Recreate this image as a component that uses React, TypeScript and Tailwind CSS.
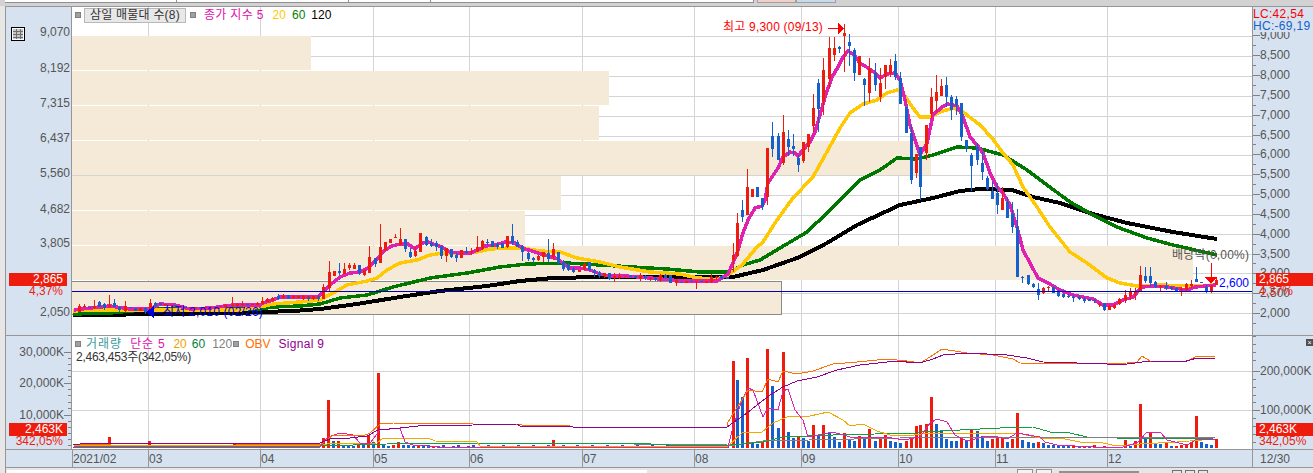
import React from 'react';

type Row = number[];

const RED = '#ee1c0c';
const BLUE = '#1660cc';

const font = { fontFamily: '"Liberation Sans", "Noto Sans CJK KR", sans-serif' };

// rows are read as: zoomX, bodyTop, bodyBottom, colour (0 red, 1 blue), wickTop, wickBottom
function seg(x0: number, y0: number, rows: Row[]) {
  return rows.map(([zx, t, b, c, wt, wb]) => ({
    x: Math.round(x0 + zx / 3),
    t: y0 + t / 3,
    b: y0 + b / 3,
    c,
    wt: y0 + (wt ?? t) / 3,
    wb: y0 + (wb ?? b) / 3,
  }));
}

const candles = [
  ...seg(60, 230, [
    [58, 228, 245, 0, 222, 245], [73, 228, 230, 0, 222, 235], [88, 230, 235, 1], [103, 228, 235, 0, 210, 238],
    [118, 215, 230, 1, 212, 232], [133, 222, 233, 1, 218, 240], [148, 224, 230, 0, 195, 232], [163, 218, 232, 1, 207, 232],
    [178, 232, 240, 1, 228, 247], [196, 228, 243, 0, 212, 246], [211, 230, 235, 1], [226, 235, 243, 1], [241, 233, 243, 0],
    [256, 235, 245, 1, 232, 252], [271, 220, 240, 0, 207, 245], [286, 218, 228, 1, 215, 235], [301, 218, 226, 1], [316, 222, 228, 0],
    [331, 225, 229, 0], [346, 226, 229, 1], [361, 228, 232, 0], [376, 230, 233, 1], [391, 231, 234, 0], [406, 231, 234, 0],
    [421, 232, 235, 1], [436, 232, 235, 0], [451, 230, 234, 0], [466, 231, 234, 1], [481, 228, 232, 0], [496, 226, 231, 0, 222, 233],
    [517, 224, 229, 0, 200, 230], [532, 222, 227, 0, 218, 230], [547, 222, 226, 0, 212, 228], [562, 222, 226, 1], [577, 222, 225, 0],
    [592, 218, 224, 0, 215, 226], [607, 214, 221, 0, 200, 223], [622, 208, 215, 0, 205, 216], [637, 205, 212, 0, 200, 214],
    [655, 198, 208, 1, 191, 210], [670, 198, 205, 0, 192, 206], [685, 196, 208, 1], [700, 197, 203, 0, 194, 206], [715, 198, 203, 0],
    [730, 199, 203, 0, 196, 210], [745, 199, 203, 0, 197, 212], [760, 199, 203, 0, 197, 210], [775, 198, 204, 0, 194, 212],
  ]),
  ...seg(300, 210, [
    [10, 263, 265, 0, 258, 270], [25, 263, 266, 1, 258, 272], [40, 263, 265, 0, 258, 271], [55, 262, 266, 1, 256, 270],
    [70, 232, 268, 0, 222, 268], [88, 185, 235, 0, 153, 243], [103, 183, 198, 0], [118, 183, 188, 1, 158, 195], [133, 178, 193, 0, 160, 193],
    [148, 165, 175, 0, 158, 180], [163, 165, 178, 0, 158, 178], [178, 165, 190, 1, 165, 195], [193, 180, 195, 0, 180, 198],
    [208, 140, 188, 0, 108, 188], [226, 143, 163, 1, 143, 170], [241, 110, 160, 0, 42, 160], [256, 96, 120, 0, 96, 122], [271, 88, 100, 0],
    [286, 82, 84, 0, 72, 84], [301, 88, 106, 0, 55, 106], [316, 87, 117, 1, 87, 125], [331, 125, 140, 1, 113, 145], [346, 122, 138, 0, 110, 140],
    [361, 69, 125, 0, 69, 127], [379, 82, 105, 1, 78, 108], [394, 100, 108, 1, 87, 112], [409, 100, 110, 1, 93, 122], [424, 108, 138, 1, 108, 147],
    [439, 113, 138, 0, 113, 155], [454, 118, 142, 1, 118, 145], [469, 135, 143, 1, 130, 155], [484, 120, 143, 0], [499, 122, 128, 1, 112, 130],
    [514, 122, 125, 0, 115, 135], [531, 112, 122, 0, 78, 125], [547, 92, 117, 0, 90, 120], [562, 95, 100, 1, 87, 105], [577, 93, 110, 1],
    [592, 103, 110, 1, 100, 118], [607, 100, 115, 1], [622, 78, 112, 0, 78, 115], [637, 78, 100, 1, 42, 105], [652, 95, 110, 1, 90, 112],
    [667, 108, 127, 1, 105, 153], [685, 130, 148, 1, 125, 152], [700, 143, 150, 1, 140, 158], [715, 137, 150, 0, 135, 153], [730, 127, 140, 0, 127, 157],
    [745, 130, 147, 1, 87, 155], [760, 118, 140, 0, 100, 150], [775, 127, 160, 1, 125, 162], [790, 155, 178, 1, 150, 182], [805, 162, 180, 1, 160, 183],
    [820, 176, 185, 1, 170, 188], [838, 180, 185, 0], [853, 163, 178, 0, 155, 180], [868, 157, 180, 1, 155, 182], [883, 180, 190, 1, 178, 202],
    [898, 188, 197, 1, 183, 203], [913, 190, 197, 0, 188, 205], [928, 190, 207, 1, 188, 210], [943, 197, 203, 0, 190, 215], [958, 197, 203, 0, 190, 207],
    [975, 198, 201, 0], [990, 196, 202, 1], [1005, 198, 203, 1], [1020, 195, 208, 0, 190, 213], [1035, 198, 205, 1, 195, 210], [1050, 205, 208, 0, 200, 212],
    [1065, 203, 209, 1, 200, 212], [1080, 195, 210, 0, 193, 215], [1095, 194, 204, 1, 192, 208], [1110, 196, 218, 1], [1128, 210, 218, 0, 207, 228],
    [1143, 215, 220, 1], [1158, 214, 220, 0], [1173, 213, 216, 1], [1188, 213, 216, 0, 213, 236], [1203, 213, 216, 1], [1218, 213, 218, 0],
    [1233, 202, 216, 0, 193, 218], [1248, 200, 204, 0, 198, 210],
  ]),
  ...seg(700, 200, [
    [64, 228, 237, 1], [82, 230, 237, 1],
    [98, 165, 180, 0, 130, 215], [112, 68, 168, 0, 40, 170], [127, 30, 50, 1, 0, 65], [142, -40, 45, 0, -93, 45],
    [157, -33, -9, 0], [172, -39, -9, 1], [187, -6, 20, 1, -6, 30], [202, -156, -9, 0, -156, 15],
  ]),
  ...seg(700, 0, [
    [217, 407, 447, 1, 365, 470], [235, 407, 480, 1, 400, 480], [250, 397, 488, 0, 345, 495], [265, 417, 440, 1, 390, 467], [280, 437, 447, 1, 403, 467],
    [295, 473, 495, 1, 465, 515], [310, 426, 482, 0, 426, 490], [325, 403, 440, 0, 403, 455], [340, 324, 377, 0, 282, 395], [355, 250, 327, 1, 238, 395],
    [370, 210, 303, 0, 175, 345], [388, 143, 238, 0, 112, 265], [403, 143, 165, 0, 112, 183], [418, 140, 147, 1, 137, 158], [433, 100, 107, 0, 72, 215],
    [448, 125, 137, 1, 103, 197], [463, 150, 218, 1, 145, 242], [478, 168, 225, 0], [493, 237, 255, 1, 235, 317], [508, 205, 278, 0, 175, 305],
    [525, 220, 255, 1, 190, 272], [541, 248, 290, 0, 205, 305], [556, 195, 232, 0, 195, 267], [571, 195, 220, 0, 178, 232], [586, 183, 232, 1, 162, 240],
    [601, 235, 312, 1, 215, 312], [617, 320, 400, 1], [632, 400, 540, 1, 375, 552], [647, 463, 520, 0, 463, 533], [661, 440, 562, 1, 440, 600],
    [679, 375, 460, 0, 375, 480], [694, 292, 342, 0, 265, 355], [709, 277, 303, 0, 225, 335], [724, 258, 288, 0, 237, 288], [739, 255, 292, 1, 232, 320],
    [754, 290, 330, 1, 285, 360], [769, 297, 315, 1, 288, 345],
  ]),
  ...seg(960, 70, [
    [3, 100, 200, 1, 100, 212], [18, 210, 235, 1, 210, 245], [33, 255, 288, 1, 250, 362], [52, 232, 270, 1, 220, 285], [67, 280, 305, 1, 245, 330],
    [82, 323, 358, 1, 318, 360], [97, 362, 387, 1, 335, 387], [112, 370, 405, 1, 340, 432], [127, 385, 420, 0, 350, 420], [142, 395, 443, 1, 380, 443],
    [157, 432, 470, 1, 395, 490], [172, 472, 620, 1, 417, 620], [187, 622, 625, 1, 618, 640], [205, 615, 642, 1, 615, 645], [220, 642, 650, 1, 638, 655],
    [235, 658, 675, 1, 640, 690], [250, 655, 670, 0, 650, 672], [265, 652, 654, 0, 648, 665], [280, 650, 668, 1], [295, 665, 678, 1, 660, 680],
    [310, 672, 682, 1, 668, 685], [325, 678, 680, 1, 672, 684], [340, 680, 684, 1, 675, 695], [358, 680, 688, 1, 675, 690], [373, 686, 694, 1, 682, 698],
    [388, 688, 693, 1], [403, 690, 692, 1, 688, 700], [418, 703, 706, 0, 698, 710], [433, 700, 719, 1, 698, 722], [448, 708, 719, 0, 705, 720],
    [463, 704, 714, 0, 702, 716], [478, 688, 703, 0, 683, 705], [495, 676, 690, 0, 660, 700], [511, 666, 678, 0, 655, 690], [526, 665, 672, 0, 655, 690],
    [541, 615, 662, 0, 588, 665], [556, 618, 633, 1, 590, 640], [571, 618, 640, 1, 590, 650], [586, 637, 650, 1, 632, 655], [601, 648, 652, 0, 645, 662],
    [617, 648, 655, 1, 635, 660], [632, 650, 656, 1, 648, 660], [648, 654, 662, 1, 650, 665], [664, 656, 660, 0, 652, 678], [679, 643, 660, 0, 640, 662],
    [694, 642, 648, 0, 630, 655], [709, 628, 635, 1, 590, 635], [724, 637, 640, 1], [739, 650, 665, 1, 645, 668], [754, 648, 665, 0, 645, 668], [769, 630, 645, 0, 620, 645],
  ]),
];

const ma5 = '74,310 90,308 110,306 130,309 150,309 160,304 175,305 190,309 210,308 233,305 260,305 263,303 273,300 280,297 300,297 318,297 323,292 330,285 340,277 350,273 360,272 368,268 378,258 385,250 392,246 400,244 408,244 415,249 422,243 428,242 436,245 442,247 450,252 458,253 470,253 478,250 485,246 495,245 505,242 515,243 522,248 535,252 548,256 558,259 565,265 570,268 580,268 590,270 600,274 610,276 625,276 640,277 660,279 672,280 680,281 717,281 728,274 733,263 738,250 743,233 748,220 755,208 762,206 765,200 768,183 778,168 783,157 790,152 795,153 798,156 803,150 810,142 815,132 820,115 825,97 832,77 838,67 843,57 848,51 854,55 860,63 868,68 875,73 880,78 887,74 895,73 900,80 905,100 910,125 915,140 920,155 927,143 933,115 942,107 948,104 957,106 963,117 970,137 977,145 983,153 990,173 997,187 1003,193 1010,205 1017,227 1023,250 1030,263 1038,278 1048,283 1060,290 1073,295 1093,299 1103,305 1113,305 1123,300 1133,297 1142,287 1153,286 1167,287 1187,290 1195,287 1216,285';
const ma20 = '73,311 93,310 150,310 240,310 260,307 273,304 300,302 320,300 333,293 347,285 367,281 377,278 387,270 400,263 417,260 430,255 443,253 460,253 477,252 490,249 510,248 523,248 540,251 560,252 577,258 600,262 620,267 650,272 680,274 693,277 715,280 728,275 742,265 757,247 763,242 775,223 790,202 793,198 813,177 828,150 840,128 850,113 863,104 877,100 887,93 897,90 903,93 913,108 920,117 930,117 940,112 953,108 963,112 980,125 992,138 1003,153 1013,165 1023,187 1037,207 1050,227 1070,252 1087,263 1107,278 1120,283 1137,286 1160,285 1193,286 1216,285';
const ma60 = '73,314 110,313 153,309 260,309 273,307 300,306 320,304 340,298 367,295 393,287 430,278 467,273 500,267 527,264 567,263 600,265 633,267 667,269 700,272 730,272 743,265 760,260 780,248 807,232 827,213 840,200 860,180 880,170 897,158 917,159 933,155 957,147 977,148 1003,155 1027,170 1047,185 1070,202 1093,215 1117,227 1147,238 1173,245 1217,255';
const ma120 = '73,315 107,315 147,314 237,313 263,312 293,311 320,309 357,304 400,297 440,291 487,286 520,281 553,278 600,277 733,277 763,270 800,257 827,243 857,225 900,205 933,198 960,191 980,189 1012,190 1033,197 1060,203 1093,214 1127,223 1173,232 1217,239';

const obv = '73,445 150,443 320,445 333,435 363,436 370,433 380,424 393,423 473,424 570,426 727,426 728,422 740,403 748,390 762,392 768,379 778,382 783,371 797,374 813,371 833,364 857,362 887,359 907,361 920,363 930,357 942,349 967,353 993,355 1013,359 1020,363 1077,364 1127,363 1137,362 1142,356 1150,361 1187,361 1197,356 1215,356';
const signal = '73,445 87,443 320,443 330,439 350,438 367,436 378,430 400,428 418,426 473,425 517,424 520,426 570,426 573,427 727,427 737,420 747,413 757,405 770,395 783,387 797,381 817,377 837,370 860,365 887,362 903,361 910,363 923,362 933,359 943,355 967,353 1007,355 1027,358 1043,362 1077,363 1107,364 1127,364 1150,361 1183,362 1197,358 1215,358';
const volMa5 = '74,447 320,447 328,437 340,433 353,435 360,443 370,443 380,430 400,428 405,442 413,445 440,447 728,447 733,427 742,400 748,388 753,390 763,417 768,408 778,410 783,391 788,389 795,410 803,420 808,437 833,432 850,437 887,437 903,440 920,437 930,423 937,419 947,422 955,435 967,441 983,437 993,436 1007,439 1017,433 1040,437 1045,442 1057,445 1093,447 1123,447 1137,443 1147,432 1160,432 1167,440 1187,445 1197,439 1215,439';
const volMa20 = '74,446 320,445 327,444 377,443 383,438 428,438 435,441 477,442 480,446 727,447 743,432 762,432 773,423 787,417 810,416 828,412 843,420 850,426 863,424 877,431 890,435 908,436 927,433 1017,433 1040,438 1060,438 1080,442 1103,443 1117,446 1140,444 1177,442 1215,439';
const volMa60 = '74,447 320,446 387,444 633,443 687,446 730,445 763,442 783,437 833,435 917,433 920,432 960,430 1000,428 1033,427 1050,432 1070,433 1087,437';
const volMa60b = '1117,438 1213,438';
const volMa120 = '633,444 727,445 728,446 763,441 900,438 1087,437 1215,437';

const volHand: Row[] = [
  [79, 444, 0], [109, 437, 0], [150, 441, 0], [232, 443, 0], [240, 445, 0], [255, 445, 0],
  [323, 438, 0], [329, 400, 0], [334, 441, 1], [339, 441, 0], [344, 446, 1], [349, 446, 1], [354, 446, 1], [359, 445, 0], [364, 445, 1],
  [369, 435, 0], [374, 442, 1], [380, 373, 0], [385, 444, 1], [390, 446, 1], [395, 445, 0], [400, 442, 0], [405, 445, 1], [410, 445, 1], [415, 446, 1],
  [420, 445, 0], [553, 440, 0],
];
const volLate: { x: number; t: number; c: number }[] = [
  ...[[98, 483, 0], [112, 540, 1], [127, 590, 1], [142, 473, 0], [157, 727, 1], [172, 732, 1], [187, 725, 0], [202, 447, 0], [217, 558, 1], [235, 683, 1], [250, 456, 0], [265, 695, 1], [280, 713, 1], [295, 710, 0], [310, 713, 1], [325, 722, 1], [340, 675, 0], [355, 706, 1], [370, 675, 0], [388, 697, 1], [403, 711, 1], [418, 725, 1], [433, 699, 0], [448, 720, 1], [463, 722, 1], [478, 708, 0], [493, 712, 1], [508, 686, 0], [525, 722, 1], [541, 716, 0], [556, 706, 0], [571, 722, 1], [586, 726, 1], [601, 728, 1], [617, 722, 0], [632, 714, 0], [647, 678, 0], [661, 675, 0], [679, 672, 0], [694, 591, 0], [709, 672, 1], [724, 692, 1], [739, 716, 1], [754, 723, 1], [769, 723, 1]].map(([z, t, c]) => ({ x: Math.round(700 + z / 3), t: 200 + t / 3, c })),
  ...[[3, 295, 0], [18, 302, 1], [33, 270, 0], [52, 273, 1], [67, 287, 1], [82, 303, 1], [97, 297, 0], [112, 293, 0], [127, 295, 0], [142, 306, 1], [157, 296, 0], [172, 219, 0], [187, 300, 1], [205, 306, 1], [220, 310, 1], [235, 306, 0], [250, 308, 1], [265, 315, 1], [280, 315, 1], [295, 315, 1], [310, 318, 1], [325, 318, 1], [340, 316, 0], [358, 320, 1], [373, 320, 0], [388, 320, 1], [403, 316, 0], [418, 320, 1], [433, 318, 0], [448, 320, 1], [463, 320, 1], [478, 320, 0], [495, 300, 0], [511, 318, 1], [526, 303, 0], [541, 192, 0], [556, 291, 1], [571, 276, 0], [586, 308, 1], [601, 312, 1], [617, 308, 0], [632, 318, 1], [648, 318, 0], [664, 316, 0], [679, 313, 0], [694, 307, 0], [709, 228, 0], [724, 306, 1], [739, 312, 1], [754, 316, 1], [769, 297, 0]].map(([z, t, c]) => ({ x: Math.round(960 + z / 3), t: 340 + t / 3, c })),
];

// the quiet months before the spike only have tiny bars
const volEarly = Array.from({ length: 132 }, (_, i) => {
  const x = Math.round(74 + i * 4.985);
  const hand = volHand.find((v) => Math.abs(v[0] - x) <= 2);
  if (hand) return { x, t: hand[1], c: hand[2] };
  return { x, t: 448 - (1 + ((i * 7) % 3)), c: i % 3 === 0 ? 0 : 1 };
});
const volumes = [...volEarly, ...volLate];

const profile = [
  { y: 36, h: 34, w: 311 },
  { y: 71, h: 34, w: 609 },
  { y: 106, h: 34, w: 599 },
  { y: 141, h: 34, w: 931 },
  { y: 176, h: 34, w: 561 },
  { y: 211, h: 34, w: 525 },
  { y: 246, h: 34, w: 1193 },
  { y: 282, h: 32, w: 781 },
];

const gridV = [148, 260, 373, 469, 582, 694, 801, 898, 995, 1107];
const gridTop = [36, 56, 76, 96, 116, 136, 155, 175, 195, 215, 234, 254, 273, 293, 313];
const gridBottom = [371, 410];

const priceLeft: [string, number][] = [
  ['9,070', 32], ['8,192', 68], ['7,315', 103], ['6,437', 138], ['5,560', 173], ['4,682', 209], ['3,805', 243], ['2,050', 312],
];
// 9,000, 3,000 and 2,500 lie partly under the LC/HC box and the price badge, as in the real chart
const priceRight: [string, number][] = [
  ['9,000', 35], ['8,500', 55], ['8,000', 75], ['7,500', 95], ['7,000', 115], ['6,500', 135], ['6,000', 154], ['5,500', 174], ['5,000', 194],
  ['4,500', 214], ['4,000', 234], ['3,500', 254], ['3,000', 273], ['2,500', 293], ['2,000', 313],
];
const dates: [string, number][] = [
  ['2021/02', 73], ['03', 149], ['04', 261], ['05', 374], ['06', 470], ['07', 583], ['08', 695], ['09', 802], ['10', 899], ['11', 996], ['12', 1108],
];

function Marker() {
  return <span className="block w-[6px] h-[6px] bg-[#a0a0a0] border border-[#808080]" />;
}

function Badge({ value, pct, side }: { value: string; pct: string; side: 'left' | 'right' }) {
  return (
    <div className={side === 'left' ? 'w-[58px] ml-[3px]' : 'w-full'}>
      <div className={`h-[13px] bg-[#ee1c0c] text-white text-[12px] leading-[13px] ${side === 'left' ? 'text-right pr-[4px]' : 'pl-[3px]'}`}>{value}</div>
      <div className={`h-[11px] text-[#ee1c0c] text-[12px] leading-[11px] ${side === 'left' ? 'text-right pr-[4px]' : 'pl-[3px]'}`}>{pct}</div>
    </div>
  );
}

function Label({ text, y, className }: { text: string; y: number; className: string }) {
  return (
    <span className={`absolute leading-[14px] whitespace-nowrap ${className}`} style={{ top: y - 7 }}>
      {text}
    </span>
  );
}

function Poly({ points, stroke, width }: { points: string; stroke: string; width: number }) {
  return <polyline points={points} fill="none" stroke={stroke} strokeWidth={width} strokeLinejoin="round" />;
}

function UpperChart() {
  return (
    <svg width={1180} height={328} viewBox="72 7 1180 328" shapeRendering="crispEdges" className="block">
      {gridTop.map((y) => (
        <rect key={y} x={72} y={y} width={1180} height={1} fill="#d4d4d4" />
      ))}
      {gridV.map((x) => (
        <rect key={x} x={x} y={7} width={1} height={328} fill="#d4d4d4" />
      ))}
      {profile.map((p) => (
        <rect key={p.y} x={72} y={p.y} width={p.w - 72} height={p.h} fill="#f5e9d8" />
      ))}
      <rect x={72} y={281} width={709} height={1} fill="#8a8a8a" />
      <rect x={72} y={314} width={710} height={1} fill="#8a8a8a" />
      <rect x={781} y={281} width={1} height={34} fill="#8a8a8a" />
      <Poly points={ma120} stroke="#000000" width={4} />
      <Poly points={ma60} stroke="#007800" width={3.5} />
      <Poly points={ma20} stroke="#ffc800" width={3.5} />
      <Poly points={ma5} stroke="#e020b0" width={3.5} />
      {candles.map((c, i) => (
        <g key={i} fill={c.c === 0 ? RED : BLUE}>
          <rect x={c.x} y={Math.min(c.wt, c.t)} width={1} height={Math.max(c.wb, c.b) - Math.min(c.wt, c.t)} />
          <rect x={c.x - 1} y={c.t} width={3} height={Math.max(c.b - c.t, 1)} />
        </g>
      ))}
      <rect x={72} y={291} width={1180} height={1} fill="#0000c0" />
      {/* high and low arrows */}
      <rect x={828} y={28} width={11} height={1} fill="#ff0000" />
      <polygon points="838,23 844,28.5 838,34" fill="#ff0000" />
      <polygon points="146,312 154,306 154,318" fill="#0000e0" />
      <rect x={150} y={312} width={13} height={1} fill="#0000e0" />
      {/* ex-dividend marker */}
      <rect x={1211} y={263} width={1} height={15} fill="#ff0000" />
      <polygon points="1205,277 1217,277 1211,284" fill="#ff0000" />
    </svg>
  );
}

function LowerChart() {
  return (
    <svg width={1180} height={113} viewBox="72 336 1180 113" shapeRendering="crispEdges" className="block">
      {gridBottom.map((y) => (
        <rect key={y} x={72} y={y} width={1180} height={1} fill="#d4d4d4" />
      ))}
      {gridV.map((x) => (
        <rect key={x} x={x} y={336} width={1} height={113} fill="#d4d4d4" />
      ))}
      {volumes.map((v, i) => (
        <rect key={i} x={v.x - 1} y={v.t} width={3} height={448 - v.t} fill={v.c === 0 ? RED : BLUE} />
      ))}
      <Poly points={volMa120} stroke="#808080" width={1} />
      <Poly points={volMa60} stroke="#10a040" width={1} />
      <Poly points={volMa60b} stroke="#10a040" width={1} />
      <Poly points={volMa20} stroke="#f0a800" width={1} />
      <Poly points={volMa5} stroke="#e020b0" width={1} />
      <Poly points={obv} stroke="#ff7000" width={1} />
      <Poly points={signal} stroke="#900090" width={1} />
    </svg>
  );
}

function Ticks({ ys, side, minor }: { ys: number[]; side: 'left' | 'right'; minor: number[] }) {
  return (
    <>
      {ys.map((y) => (
        <span key={y} className={`absolute w-[7px] h-px bg-[#808080] ${side === 'left' ? 'right-0' : 'left-0'}`} style={{ top: y }} />
      ))}
      {minor.map((y) => (
        <span key={y} className={`absolute w-[3px] h-px bg-[#808080] ${side === 'left' ? 'right-0' : 'left-0'}`} style={{ top: y }} />
      ))}
    </>
  );
}

export default function App() {
  return (
    <div className="w-[1313px] h-[473px] overflow-hidden flex flex-col bg-[#e6e6e6] text-[#555555] text-[12px]" style={font}>
      {/* window tabs cut off at the top */}
      <div className="h-[6px] bg-[#d2d2d2] shrink-0 flex items-start pl-[5px]">
        <div className="h-[3px] w-[172px] bg-white border-r border-b border-[#909090]" />
        <div className="h-[3px] w-[172px] bg-white border-r border-b border-[#909090]" />
        <div className="h-[3px] w-[82px] bg-white border-r border-b border-[#909090]" />
        <div className="h-[3px] w-[323px] bg-white border-r border-b border-[#909090]" />
        <div className="h-[3px] w-[39px] ml-[3px] bg-[#f2cfc8] border border-t-0 border-[#a0a0a0]" />
        <div className="h-[3px] w-[40px] bg-[#c8daf0] border border-t-0 border-[#a0a0a0]" />
      </div>

      <div className="flex-1 flex min-h-0">
        <div className="w-[5px] shrink-0" />
        <div className="flex-1 flex flex-col border-t border-[#969696] border-l min-w-0">
          {/* price pane */}
          <div className="h-[328px] flex shrink-0 border-b border-[#969696] box-content">
            <div className="w-[65px] relative bg-[#d6e2f0] border-r border-[#969696] box-content">
              <svg width={14} height={14} viewBox="0 0 14 14" shapeRendering="crispEdges" className="absolute left-[5px] top-[20px]">
                <rect x={0.5} y={0.5} width={13} height={13} fill="#ffffff" stroke="#000000" />
                <rect x={2} y={2} width={10} height={10} fill="#c8c8c8" />
                <path d="M2 4.5h10M2 7.5h10M2 10.5h10M5 2v10M9 2v10" stroke="#707070" strokeWidth={1} />
              </svg>
              {priceLeft.map(([t, y]) => (
                <Label key={t} text={t} y={y - 7} className="right-[1px]" />
              ))}
              <div className="absolute left-0 top-[266px]">
                <Badge value="2,865" pct="4,37%" side="left" />
              </div>
            </div>
            <div className="w-[1180px] relative bg-white">
              <UpperChart />
              <div className="absolute left-[3px] top-[1px] flex items-center gap-[2px] h-[14px] whitespace-nowrap">
                <Marker />
                <span className="h-[15px] w-[102px] ml-[1px] flex items-center justify-center bg-[#e8e8e8] border border-[#b8b8b8] text-[#333333] tracking-[0.2px]">삼일 매물대 수(8)</span>
                <span className="ml-[2px]"><Marker /></span>
                <span className="ml-[6px] text-[#e010b0] tracking-[0.3px]">종가 지수 5</span>
                <span className="ml-[7px] text-[#ffc800]">20</span>
                <span className="ml-[4px] text-[#008000]">60</span>
                <span className="ml-[4px] text-black">120</span>
              </div>
              <Label text="최고 9,300 (09/13)" y={20} className="left-[651px] text-[#ff0000] tracking-[0.2px]" />
              <Label text="최저 2,010 (02/26)" y={305} className="left-[91px] text-[#0000e0] tracking-[0.2px]" />
              <Label text="배당락(0,00%)" y={248} className="left-[1100px] text-[#555555] tracking-[0.2px]" />
              <Label text="2,600" y={276} className="left-[1147px] text-[#0000ff]" />
            </div>
            <div className="flex-1 relative bg-[#d6e2f0] border-l border-[#969696]">
              <Ticks
                ys={[28, 48, 68, 88, 108, 128, 147, 167, 187, 207, 227, 247, 266, 286, 306]}
                side="right"
                minor={[38, 58, 78, 98, 118, 137, 157, 177, 197, 217, 237, 256, 276, 296, 316]}
              />
              {priceRight.map(([t, y]) => (
                <Label key={t} text={t} y={y - 7} className="left-[7px]" />
              ))}
              <div className="absolute left-0 top-[1px] w-full bg-[#d6e2f0] h-[24px] leading-[12px] tracking-[0.3px]">
                <div className="text-[#ff0000]">LC:42,54</div>
                <div className="text-[#1660cc]">HC:-69,19</div>
              </div>
              <div className="absolute left-[3px] right-0 top-[266px]">
                <Badge value="2,865" pct="4,37%" side="right" />
              </div>
            </div>
          </div>

          {/* volume pane */}
          <div className="h-[113px] flex shrink-0 border-b border-[#969696] box-content">
            <div className="w-[65px] relative bg-[#d6e2f0] border-r border-[#969696] box-content">
              <Ticks
                ys={[16, 47, 79]}
                side="left"
                minor={[22, 28, 34, 40, 53, 59, 66, 72, 85, 91, 97, 103, 109]}
              />
              <Label text="30,000K" y={16} className="right-[7px]" />
              <Label text="20,000K" y={47} className="right-[7px]" />
              <Label text="10,000K" y={79} className="right-[7px]" />
              <div className="absolute left-0 top-[87px]">
                <Badge value="2,463K" pct="342,05%" side="left" />
              </div>
            </div>
            <div className="w-[1180px] relative bg-white">
              <LowerChart />
              <div className="absolute left-[3px] top-[1px] flex items-center h-[14px] whitespace-nowrap">
                <Marker />
                <span className="ml-[5px] text-[#3a9a9a] tracking-[1px]">거래량</span>
                <span className="ml-[8px] text-[#e010b0] tracking-[0.8px]">단순 5</span>
                <span className="ml-[8px] text-[#f0a000]">20</span>
                <span className="ml-[5px] text-[#008040]">60</span>
                <span className="ml-[7px] text-[#808080]">120</span>
                <span className="ml-[1px]"><Marker /></span>
                <span className="ml-[6px] text-[#ff7000]">OBV</span>
                <span className="ml-[8px] text-[#900090] tracking-[0.3px]">Signal 9</span>
              </div>
              <Label text="2,463,453주(342,05%)" y={21} className="left-[4px] text-[#333333] tracking-[-0.25px]" />
            </div>
            <div className="flex-1 relative bg-[#d6e2f0] border-l border-[#969696]">
              <Ticks
                ys={[35, 74]}
                side="right"
                minor={[0, 8, 16, 24, 43, 51, 59, 66, 82, 90, 98, 106]}
              />
              <Label text="200,000K" y={35} className="left-[7px]" />
              <Label text="100,000K" y={74} className="left-[7px]" />
              <div className="absolute left-[3px] right-0 top-[87px]">
                <Badge value="2,463K" pct="342,05%" side="right" />
              </div>
              <span className="absolute right-0 top-[3px] w-[7px] h-[7px] bg-[#505050] text-white text-[7px] leading-[7px] text-center">×</span>
            </div>
          </div>

          {/* date axis */}
          <div className="h-[17px] shrink-0 relative bg-[#d6e2f0] border-b border-[#969696] box-content">
            <span className="absolute left-[66px] top-0 h-full w-px bg-[#969696]" />
            {gridV.map((x) => (
              <span key={x} className="absolute top-0 h-full w-px bg-[#969696]" style={{ left: x - 6 }} />
            ))}
            <span className="absolute left-[1246px] top-0 h-full w-px bg-[#969696]" />
            {dates.map(([t, x]) => (
              <span key={t} className="absolute top-[2px] leading-[14px]" style={{ left: x - 6 }}>
                {t}
              </span>
            ))}
            <span className="absolute left-[1254px] top-[2px] leading-[14px]">12/30</span>
          </div>

          {/* scroll bar and toolbar, mostly cut off */}
          <div className="flex-1 flex items-end">
            <div className="h-[3px] w-[640px] ml-[1px] bg-white" />
            <div className="flex items-end gap-[3px] ml-[370px]">
              <span className="w-[16px] h-[4px] bg-[#f4f4f4] border border-b-0 border-[#909090]" />
              <span className="w-[16px] h-[4px] bg-[#f4f4f4] border border-b-0 border-[#909090]" />
              <span className="w-[80px] h-[2px] bg-[#909090] ml-[4px]" />
              <span className="w-[10px] h-[3px] border border-b-0 border-[#707070] ml-[30px]" />
              <span className="w-[10px] h-[3px] border border-b-0 border-[#707070]" />
              <span className="w-[10px] h-[3px] border border-b-0 border-[#707070]" />
            </div>
          </div>
        </div>
      </div>
    </div>
  );
}
